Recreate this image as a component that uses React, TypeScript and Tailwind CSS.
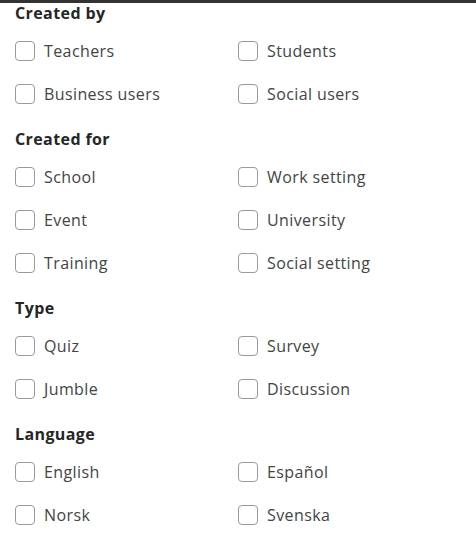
const sections: { title: string; options: string[] }[] = [
  { title: 'Created by', options: ['Teachers', 'Students', 'Business users', 'Social users'] },
  { title: 'Created for', options: ['School', 'Work setting', 'Event', 'University', 'Training', 'Social setting'] },
  { title: 'Type', options: ['Quiz', 'Survey', 'Jumble', 'Discussion'] },
  { title: 'Language', options: ['English', 'Español', 'Norsk', 'Svenska'] },
]

function Option({ label }: { label: string }) {
  return (
    <label className="flex h-[43px] items-center gap-[9px]">
      <input
        type="checkbox"
        className="h-5 w-5 shrink-0 appearance-none rounded-[4px] border border-[#9a9a9a] bg-white"
      />
      <span className="text-[16px] tracking-[0.4px] text-[#444]">{label}</span>
    </label>
  )
}

export default function App() {
  return (
    <div className="h-[548px] w-[476px] overflow-hidden bg-white font-['Open_Sans',sans-serif]">
      <div className="h-[3px] w-full bg-[#333]" />
      <div className="px-[15px]">
        {sections.map((s, i) => (
          <div key={s.title} className={i === 0 ? 'pt-[1px]' : 'pt-[15px]'}>
            <h3 className="h-[18px] text-[16px] font-bold leading-[18px] tracking-[0.4px] text-[#262626]">
              {s.title}
            </h3>
            <div className="mt-[7px] grid grid-cols-[223px_1fr]">
              {s.options.map((o) => (
                <Option key={o} label={o} />
              ))}
            </div>
          </div>
        ))}
      </div>
    </div>
  )
}
